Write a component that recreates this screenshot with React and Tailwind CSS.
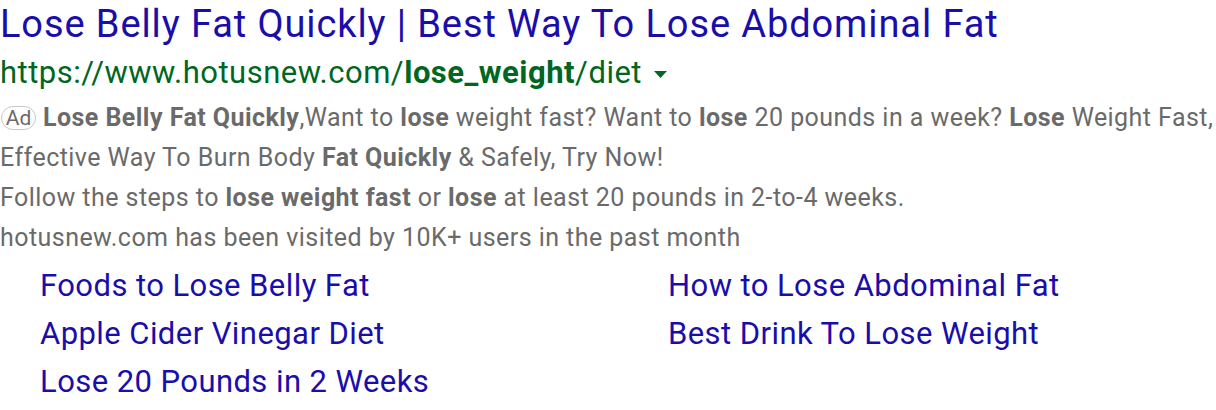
export default function App() {
  const f = { fontFamily: "Roboto, 'Liberation Sans', sans-serif" };
  return (
    <div className="w-[1216px] h-[410px] bg-white overflow-hidden" style={f}>
      <div className="text-[38px] leading-[48px] tracking-[0.9px] text-[#1a0dab] whitespace-nowrap">
        Lose Belly Fat Quickly | Best Way To Lose Abdominal Fat
      </div>
      <div className="flex items-center text-[31px] leading-[50px] tracking-[0.5px] text-[#006621] whitespace-nowrap">
        <span>
          https://www.hotusnew.com/<b className="font-bold">lose_weight</b>/diet
        </span>
        <svg width="13" height="7" viewBox="0 0 13 7" className="ml-[12px] mt-[2px]">
          <path d="M0 0 L13 0 L6.5 7 Z" fill="#006621" />
        </svg>
      </div>
      <div className="text-[25px] leading-[40px] tracking-[0.45px] text-[#6a6a6a]">
        <div className="whitespace-nowrap flex items-center">
          <span className="inline-flex items-center justify-center border border-[#c8c8c8] rounded-[12px] h-[24px] w-[35px] text-[21px] tracking-normal leading-none mr-[7px] ml-[1px] text-[#6a6a6a]">
            Ad
          </span>
          <span>
            <b className="font-bold">Lose Belly Fat Quickly</b>,Want to <b className="font-bold">lose</b> weight fast? Want to{" "}
            <b className="font-bold">lose</b> 20 pounds in a week? <b className="font-bold">Lose</b> Weight Fast,
          </span>
        </div>
        <div className="whitespace-nowrap">
          Effective Way To Burn Body <b className="font-bold">Fat Quickly</b> &amp; Safely, Try Now!
        </div>
        <div className="whitespace-nowrap">
          Follow the steps to <b className="font-bold">lose weight fast</b> or <b className="font-bold">lose</b> at least 20 pounds in 2-to-4 weeks.
        </div>
        <div className="whitespace-nowrap">hotusnew.com has been visited by 10K+ users in the past month</div>
      </div>
      <div className="grid grid-cols-[628px_1fr] pl-[40px] pt-[4px] text-[31px] leading-[48px] tracking-[0.43px] text-[#1a0dab] whitespace-nowrap">
        <div>Foods to Lose Belly Fat</div>
        <div>How to Lose Abdominal Fat</div>
        <div>Apple Cider Vinegar Diet</div>
        <div>Best Drink To Lose Weight</div>
        <div>Lose 20 Pounds in 2 Weeks</div>
      </div>
    </div>
  );
}
